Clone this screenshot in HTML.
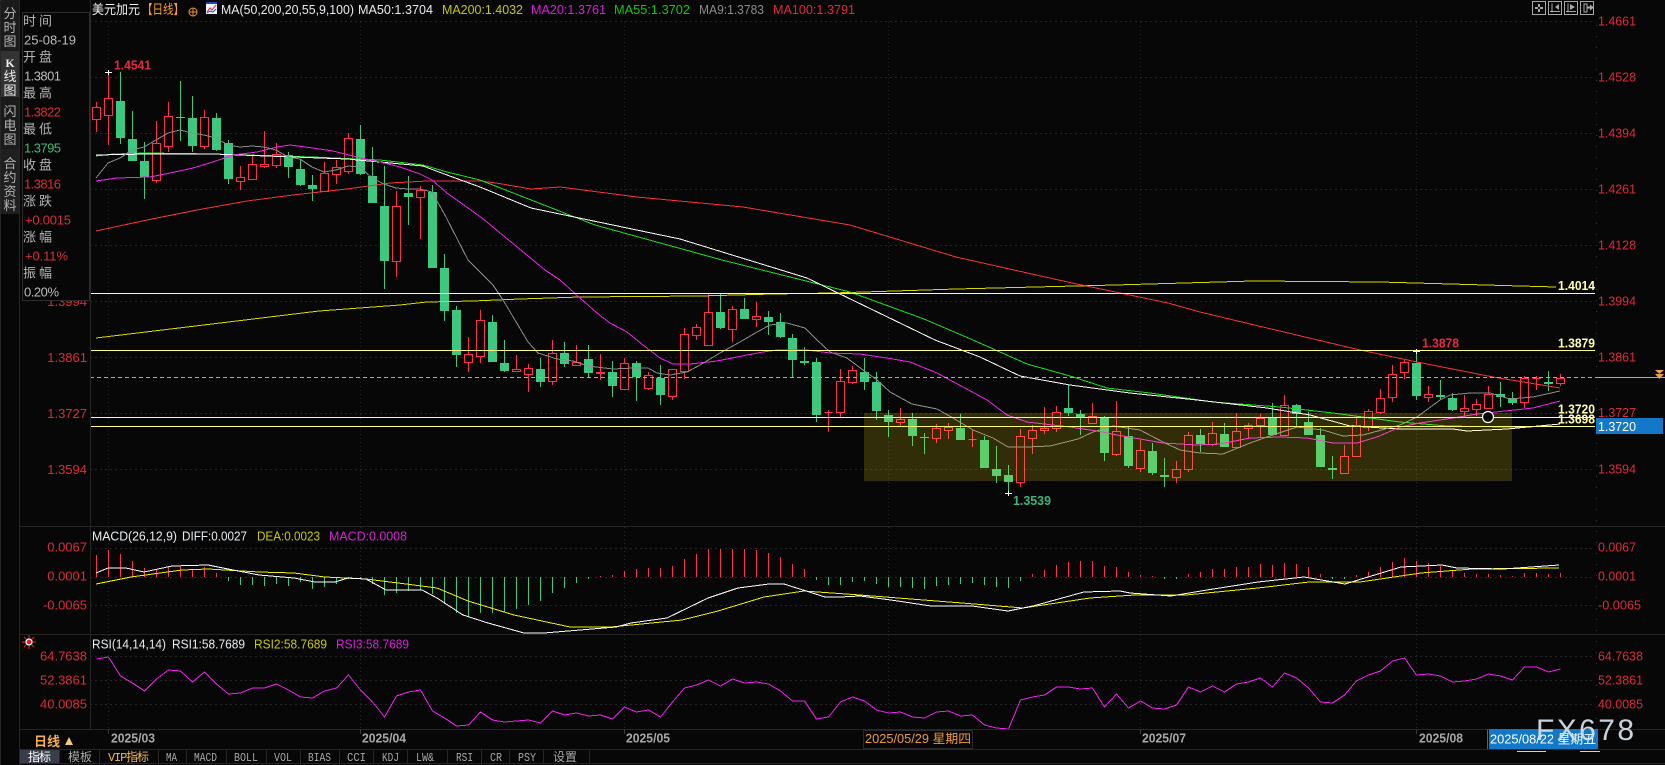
<!DOCTYPE html>
<html><head><meta charset="utf-8"><title>美元加元 日线</title>
<style>
html,body{margin:0;padding:0;background:#070707;width:1665px;height:765px;overflow:hidden}
svg{display:block}
text{font-family:"Liberation Sans","Noto Sans CJK SC",sans-serif;font-size:13px;fill:#b8b8b8}
.r{fill:#dc2a3c}.w{fill:#e8ecf0}.cn{font-size:13px;fill:#b4b4b4}
.ax{fill:#dc2a3c}.g{fill:#3fb97c}.y{fill:#c8c800}.m{fill:#d820d8}.p{fill:#ffffa8;font-weight:bold;font-size:12.5px}
.t{font-family:"Liberation Mono","Noto Sans CJK SC",monospace;font-size:12px;fill:#a8a8a8}
.d{fill:#a8a8a8;font-weight:bold;font-size:12.5px}
</style></head><body>
<svg width="1665" height="765" viewBox="0 0 1665 765" xmlns="http://www.w3.org/2000/svg">
<rect width="1665" height="765" fill="#070707"/>

<!-- grid -->
<g stroke="#262626" stroke-dasharray="2 3" fill="none" shape-rendering="crispEdges">
<path d="M90 21.5H1595M90 77.5H1595M90 133.5H1595M90 189.5H1595M90 245.5H1595M90 301.5H1595M90 357.5H1595M90 413.5H1595M90 469.5H1595M90 548.5H1595M90 577.5H1595M90 605.5H1595M90 656.5H1595M90 680.5H1595M90 704.5H1595"/>
<path stroke-dasharray="1 3" d="M108.5 22V525M360.5 22V525M624.5 22V525M888.5 22V525M1140.5 22V525M1416.5 22V525M108.5 527V633M360.5 527V633M624.5 527V633M888.5 527V633M1140.5 527V633M1416.5 527V633M108.5 635V729M360.5 635V729M624.5 635V729M888.5 635V729M1140.5 635V729M1416.5 635V729"/>
<path stroke-dasharray="1 10" stroke="#383838" d="M1596.5 25V729"/>
</g>

<!-- candles -->
<g shape-rendering="crispEdges">
<path fill="none" stroke="#ff2f4b" d="M96.5 102V132M108.5 72V145M156.5 121V183M168.5 102V152M204.5 110V149M240.5 166V190M252.5 156V179M264.5 131V168M276.5 143V168M324.5 162V191M336.5 160V184M348.5 133V174M396.5 191V277M420.5 186V239M468.5 337V372M480.5 310V363M516.5 355V372M528.5 364V392M552.5 340V385M576.5 345V366M600.5 354V380M624.5 358V390M648.5 372V390M672.5 369V400M684.5 328V379M696.5 324V340M708.5 293V345M732.5 306V342M756.5 302V327M828.5 410V432M840.5 369V417M852.5 366V384M900.5 408V426M936.5 424V443M948.5 423V439M972.5 430V447M1020.5 429V487M1032.5 425V454M1044.5 407V434M1056.5 406V432M1092.5 403V423M1116.5 401V456M1140.5 440V472M1176.5 461V483M1188.5 432V472M1212.5 422V446M1236.5 413V447M1248.5 423V439M1260.5 414V438M1284.5 395V436M1344.5 445V473M1356.5 416V456M1368.5 409V431M1380.5 389V414M1392.5 365V402M1404.5 359V379M1428.5 386V402M1464.5 395V417M1476.5 399V416M1488.5 386V408M1524.5 376V408M1536.5 376V390M1560.5 374V386"/>
<path fill="none" stroke="#3cc87f" d="M120.5 72V144M132.5 111V161M144.5 142V199M180.5 81V141M192.5 96V152M216.5 113V151M228.5 140V184M288.5 152V178M300.5 160V186M312.5 175V201M360.5 125V175M372.5 147V203M384.5 166V289M408.5 176V225M432.5 185V268M444.5 254V321M456.5 306V367M492.5 315V362M504.5 340V372M540.5 358V387M564.5 342V367M588.5 345V377M612.5 361V397M636.5 361V401M660.5 365V405M720.5 293V329M744.5 298V319M768.5 311V335M780.5 313V338M792.5 334V377M804.5 347V365M816.5 358V422M864.5 358V390M876.5 372V420M888.5 410V437M912.5 413V446M924.5 433V454M960.5 414V440M984.5 436V468M996.5 446V483M1008.5 465V493M1068.5 385V416M1080.5 410V435M1104.5 416V461M1128.5 427V468M1152.5 443V475M1164.5 458V487M1200.5 429V452M1224.5 423V447M1272.5 403V435M1296.5 404V427M1308.5 412V435M1320.5 428V467M1332.5 456V479M1416.5 351V400M1440.5 380V400M1452.5 393V411M1500.5 382V407M1512.5 392V405M1548.5 371V391"/>
<path fill="#070707" stroke="#ff2f4b" d="M92.5 107.5h8v12h-8zM104.5 98.5h8v17h-8zM152.5 143.5h8v37h-8zM164.5 116.5h8v30h-8zM200.5 117.5h8v29h-8zM236.5 177.5h8v4h-8zM248.5 164.5h8v15h-8zM260.5 164.5h8v2h-8zM272.5 154.5h8v11h-8zM320.5 173.5h8v18h-8zM332.5 167.5h8v7h-8zM344.5 138.5h8v33h-8zM392.5 206.5h8v55h-8zM416.5 190.5h8v7h-8zM464.5 354.5h8v8h-8zM476.5 320.5h8v36h-8zM512.5 369.5h8v2h-8zM524.5 368.5h8v6h-8zM548.5 353.5h8v28h-8zM572.5 362.5h8v3h-8zM596.5 372.5h8v1h-8zM620.5 363.5h8v26h-8zM644.5 375.5h8v13h-8zM668.5 369.5h8v27h-8zM680.5 334.5h8v37h-8zM692.5 327.5h8v8h-8zM704.5 312.5h8v33h-8zM728.5 309.5h8v20h-8zM752.5 316.5h8v3h-8zM824.5 412.5h8v0h-8zM836.5 381.5h8v31h-8zM848.5 370.5h8v12h-8zM896.5 419.5h8v3h-8zM932.5 428.5h8v10h-8zM944.5 427.5h8v3h-8zM968.5 439.5h8v0h-8zM1016.5 436.5h8v46h-8zM1028.5 430.5h8v8h-8zM1040.5 428.5h8v2h-8zM1052.5 412.5h8v16h-8zM1088.5 416.5h8v7h-8zM1112.5 431.5h8v23h-8zM1136.5 450.5h8v18h-8zM1172.5 469.5h8v8h-8zM1184.5 435.5h8v34h-8zM1208.5 433.5h8v11h-8zM1232.5 431.5h8v16h-8zM1244.5 425.5h8v3h-8zM1256.5 418.5h8v7h-8zM1280.5 405.5h8v30h-8zM1340.5 456.5h8v17h-8zM1352.5 425.5h8v31h-8zM1364.5 411.5h8v15h-8zM1376.5 398.5h8v14h-8zM1388.5 374.5h8v23h-8zM1400.5 362.5h8v10h-8zM1424.5 394.5h8v3h-8zM1460.5 408.5h8v3h-8zM1472.5 404.5h8v5h-8zM1484.5 394.5h8v14h-8zM1520.5 378.5h8v24h-8zM1532.5 378.5h8v0h-8zM1556.5 378.5h8v5h-8z"/>
<path fill="#3cc87f" d="M116 101h9v37h-9zM128 139h9v22h-9zM140 161h9v16h-9zM176 117h9v1h-9zM188 118h9v28h-9zM212 118h9v32h-9zM224 143h9v36h-9zM284 155h9v12h-9zM296 169h9v16h-9zM308 185h9v4h-9zM356 139h9v35h-9zM368 176h9v27h-9zM380 206h9v55h-9zM404 193h9v4h-9zM428 192h9v76h-9zM440 268h9v43h-9zM452 310h9v45h-9zM488 322h9v40h-9zM500 363h9v8h-9zM536 369h9v13h-9zM560 353h9v11h-9zM584 359h9v14h-9zM608 372h9v14h-9zM632 363h9v14h-9zM656 378h9v17h-9zM716 312h9v16h-9zM740 309h9v10h-9zM764 317h9v5h-9zM776 322h9v15h-9zM788 338h9v22h-9zM800 361h9v2h-9zM812 362h9v53h-9zM860 372h9v10h-9zM872 382h9v29h-9zM884 415h9v7h-9zM908 419h9v17h-9zM920 437h9v1h-9zM956 428h9v12h-9zM980 440h9v28h-9zM992 469h9v7h-9zM1004 475h9v7h-9zM1064 408h9v5h-9zM1076 414h9v3h-9zM1100 417h9v36h-9zM1124 436h9v30h-9zM1148 451h9v22h-9zM1160 475h9v2h-9zM1196 435h9v9h-9zM1220 434h9v13h-9zM1268 418h9v17h-9zM1292 405h9v9h-9zM1304 422h9v13h-9zM1316 435h9v32h-9zM1328 468h9v2h-9zM1412 363h9v33h-9zM1436 395h9v2h-9zM1448 398h9v12h-9zM1496 394h9v3h-9zM1508 398h9v5h-9zM1544 382h9v2h-9z"/>
</g>

<!-- MA lines -->
<g fill="none" shape-rendering="crispEdges">
<polyline stroke="#d8d800" points="96,338 212,324 319,311 400,305 427,302 473,301 520,299 580,297 700,296 773,294 833,293 956,289 1115,285 1253,281 1380,282 1556,287"/>
<polyline stroke="#f83232" points="96,231 147,220 197,210 247,201 293,195 347,189 390,183 427,181 480,181 496,183 531,189 560,187 637,197 743,207 850,225 956,257 1072,283 1168,303 1200,312 1267,328 1360,350 1417,362 1493,377 1560,388"/>
<polyline stroke="#18e018" points="96,156 113,154 147,153 213,154 313,157 380,160 423,165 447,172 480,180 595,225 722,260 850,292 924,319 973,340 1000,352 1027,364 1070,376 1107,388 1150,393 1213,402 1280,407 1333,413 1400,422 1447,426 1507,427 1530,427 1560,424"/>
<polyline stroke="#ffffff" points="96,155 147,154 213,154 347,159 423,166 447,175 480,187 531,208 680,239 807,278 935,340 980,357 1020,376 1070,385 1130,393 1197,400 1267,408 1310,415 1350,426 1400,429 1453,429 1467,431 1507,429 1560,424"/>
<polyline stroke="#f020f0" points="96,181 117,178 150,177 170,173 193,168 213,162 233,155 257,152 277,147 290,145 313,148 333,151 357,157 380,162 400,167 420,174 432,180 447,193 482,218 545,270 560,280 580,298 597,313 610,323 627,332 643,345 660,358 673,364 690,364 717,361 737,357 763,352 777,350 807,350 830,353 860,354 887,358 910,362 937,373 963,387 987,400 1007,415 1027,422 1070,427 1097,431 1117,435 1163,443 1197,445 1220,444 1250,438 1280,437 1307,438 1333,443 1357,443 1377,437 1400,427 1420,423 1453,418 1477,414 1533,408 1560,401"/>
<polyline stroke="#8c8c8c" points="96,178 108,163 120,158 132,150 144,147 156,140 168,133 180,130 192,133 204,135 216,138 228,145 240,147 252,146 264,147 276,150 288,157 300,159 312,167 324,172 336,170 348,166 360,167 372,178 384,184 396,188 408,189 420,189 432,192 446,217 468,260 478,270 493,285 503,300 515,320 528,342 538,353 557,359 573,361 588,366 613,369 633,368 648,368 657,373 670,375 687,372 700,365 720,353 740,342 757,332 770,325 787,323 805,328 817,340 830,352 847,358 863,370 877,380 890,392 912,404 937,409 953,418 973,430 993,438 1008,447 1027,447 1050,446 1078,439 1093,432 1113,426 1140,430 1163,442 1180,450 1200,453 1223,454 1250,443 1267,437 1297,427 1323,430 1343,436 1363,435 1400,425 1417,417 1440,400 1450,395 1470,393 1490,393 1510,399 1533,397 1560,391"/>
</g>

<!-- horizontal drawn lines -->
<g stroke="#ffff8c" shape-rendering="crispEdges">
<path d="M90 293.5H1595M90 350.5H1595M90 417.5H1595M90 426.5H1595"/>
</g>
<path d="M90 377.5H1595" stroke="#e8a050" stroke-dasharray="4 3" shape-rendering="crispEdges"/>
<path d="M1595 377.5H1665" stroke="#e8a050" shape-rendering="crispEdges"/>
<path d="M1655 370h9l-4.500 4zM1655 374h9l-4.500 5z" fill="#e8a050"/>

<!-- zone -->
<rect x="864" y="413" width="648" height="68" fill="rgb(255,235,20)" fill-opacity=".17"/>

<!-- high/low marks -->
<g stroke="#fff" shape-rendering="crispEdges">
<path d="M105 72.500h7M108.500 70v5M1005 493.500h7M1008.500 491v5M1413 351.500h7M1416.500 349v5"/>
</g>
<circle cx="1488" cy="417" r="5.500" fill="#070707" stroke="#fff" stroke-width="1.200"/>
<text x="114" y="69.500" style="font-weight:bold;fill:#e8283e" textLength="37" lengthAdjust="spacingAndGlyphs">1.4541</text>
<text x="1013" y="505" style="font-weight:bold;fill:#3cb37a" textLength="38" lengthAdjust="spacingAndGlyphs">1.3539</text>
<text x="1422" y="347.500" style="font-weight:bold;fill:#e8283e" textLength="37" lengthAdjust="spacingAndGlyphs">1.3878</text>
<text x="1558" y="290" class="p" textLength="37" lengthAdjust="spacingAndGlyphs">1.4014</text>
<text x="1558" y="347.500" class="p" textLength="37" lengthAdjust="spacingAndGlyphs">1.3879</text>
<text x="1558" y="423.500" class="p" textLength="37" lengthAdjust="spacingAndGlyphs">1.3698</text>
<text x="1558" y="413.500" class="p" textLength="37" lengthAdjust="spacingAndGlyphs">1.3720</text>

<!-- MACD histogram -->
<g shape-rendering="crispEdges" fill="none">
<path stroke="#ff3050" d="M96.500 577V555M108.500 577V550M120.500 577V554M132.500 577V561M144.500 577V568M156.500 577V569M168.500 577V566M180.500 577V566M192.500 577V569M204.500 577V567M216.500 577V573M600.500 577V576M612.500 577V575M624.500 577V571M636.500 577V569M648.500 577V568M660.500 577V568M672.500 577V566M684.500 577V559M696.500 577V554M708.500 577V549M720.500 577V549M732.500 577V549M744.500 577V549M756.500 577V550M768.500 577V553M780.500 577V557M792.500 577V564M804.500 577V569M1032.500 577V574M1044.500 577V570M1056.500 577V565M1068.500 577V562M1080.500 577V561M1092.500 577V561M1104.500 577V566M1116.500 577V567M1128.500 577V572M1140.500 577V575M1152.500 577V576M1188.500 577V574M1200.500 577V572M1212.500 577V569M1224.500 577V569M1236.500 577V567M1248.500 577V567M1260.500 577V564M1272.500 577V565M1284.500 577V563M1296.500 577V564M1308.500 577V567M1320.500 577V574M1356.500 577V575M1368.500 577V572M1380.500 577V567M1392.500 577V562M1404.500 577V558M1416.500 577V561M1428.500 577V563M1440.500 577V566M1452.500 577V570M1464.500 577V573M1476.500 577V574M1488.500 577V574M1500.500 577V575M1512.500 577V576M1524.500 577V573M1536.500 577V573M1548.500 577V574M1560.500 577V573"/>
<path stroke="#3cc87f" d="M228.500 577V581M240.500 577V585M252.500 577V585M264.500 577V586M276.500 577V584M288.500 577V586M300.500 577V582M312.500 577V589M324.500 577V587M336.500 577V584M348.500 577V579M360.500 577V579M372.500 577V584M384.500 577V595M396.500 577V593M408.500 577V591M420.500 577V590M432.500 577V594M444.500 577V604M456.500 577V613M468.500 577V617M480.500 577V613M492.500 577V613M504.500 577V612M516.500 577V609M528.500 577V605M540.500 577V601M552.500 577V593M564.500 577V588M576.500 577V583M588.500 577V579M816.500 577V580M828.500 577V585M840.500 577V585M852.500 577V582M864.500 577V581M876.500 577V584M888.500 577V587M900.500 577V587M912.500 577V588M924.500 577V589M936.500 577V586M948.500 577V585M960.500 577V584M972.500 577V583M984.500 577V585M996.500 577V587M1008.500 577V588M1020.500 577V581M1164.500 577V579M1176.500 577V579M1332.500 577V579M1344.500 577V579"/>
</g>
<g fill="none" shape-rendering="crispEdges">
<polyline stroke="#f0f000" points="96,584 131,577 182,570 208,569 259,572 294,573 325,577 366,579 406,584 437,588 468,601 514,615 570,627 611,627 682,620 718,611 764,597 804,591 860,595 911,599 962,603 1023,608 1090,598 1135,595 1186,595 1258,588 1309,582 1360,582 1421,573 1472,569 1559,568"/>
<polyline stroke="#ffffff" points="96,573 108,568 126,568 144,572 172,566 208,565 228,569 259,575 294,578 315,582 335,582 348,578 366,579 386,590 422,590 437,598 463,615 488,623 524,633 544,633 616,627 631,623 667,618 708,598 738,588 769,584 784,584 825,597 840,597 860,596 891,600 931,606 972,606 1008,611 1033,606 1084,592 1120,591 1130,593 1171,596 1207,590 1258,582 1304,577 1345,584 1401,567 1442,565 1457,568 1503,569 1559,565"/>
</g>

<!-- RSI -->
<polyline fill="none" stroke="#f020f0" shape-rendering="crispEdges" points="96.500,659 108.500,657 120.500,676 132.500,683 144.500,691 156.500,679 168.500,670 180.500,671 192.500,682 204.500,672 216.500,684 228.500,694 240.500,693 252.500,688 264.500,688 276.500,684 288.500,690 300.500,697 312.500,698 324.500,691 336.500,688 348.500,675 360.500,690 372.500,702 384.500,717 396.500,696 408.500,692 420.500,690 432.500,711 444.500,718 456.500,726 468.500,725 480.500,712 492.500,720 504.500,722 516.500,721 528.500,720 540.500,723 552.500,711 564.500,715 576.500,713 588.500,716 600.500,715 612.500,719 624.500,707 636.500,712 648.500,710 660.500,717 672.500,702 684.500,688 696.500,685 708.500,680 720.500,686 732.500,679 744.500,683 756.500,682 768.500,684 780.500,691 792.500,701 804.500,701 816.500,719 828.500,717 840.500,702 852.500,697 864.500,701 876.500,710 888.500,713 900.500,712 912.500,717 924.500,718 936.500,712 948.500,711 960.500,716 972.500,715 984.500,725 996.500,728 1008.500,729 1020.500,700 1032.500,697 1044.500,695 1056.500,687 1068.500,687 1080.500,689 1092.500,688 1104.500,707 1116.500,694 1128.500,708 1140.500,701 1152.500,708 1164.500,709 1176.500,705 1188.500,687 1200.500,692 1212.500,686 1224.500,692 1236.500,684 1248.500,682 1260.500,678 1272.500,687 1284.500,673 1296.500,678 1308.500,688 1320.500,702 1332.500,703 1344.500,695 1356.500,681 1368.500,675 1380.500,671 1392.500,661 1404.500,658 1416.500,675 1428.500,674 1440.500,676 1452.500,682 1464.500,681 1476.500,679 1488.500,674 1500.500,676 1512.500,680 1524.500,667 1536.500,667 1548.500,672 1560.500,669"/>

<!-- frame lines -->
<g stroke="#262626" shape-rendering="crispEdges">
<path d="M90.500 0V729M19.500 0V765M0.500 0V765M20 526.500H1665M20 634.500H1665M20 729.500H1665M20 749.500H1665M20 763.500H1665"/>
<path stroke="#3a3a3a" d="M108.500 729V734M360.500 729V734M624.500 729V734M1140.500 729V734M1416.500 729V734"/>
<path d="M59.500 749V763M99.500 749V763M158.500 749V763M186.500 749V763M226.500 749V763M266.500 749V763M300.500 749V763M339.500 749V763M373.500 749V763M407.500 749V763M447.500 749V763M481.500 749V763M509.500 749V763M543.500 749V763M589.500 749V763"/>
</g>

<!-- left axis labels -->
<g text-anchor="end">
<text x="87" y="306" class="ax">1.3994</text>
<text x="87" y="362" class="ax">1.3861</text>
<text x="87" y="418" class="ax">1.3727</text>
<text x="87" y="474" class="ax">1.3594</text>
<text x="87" y="551.500" class="ax">0.0067</text>
<text x="87" y="580.500" class="ax">0.0001</text>
<text x="87" y="609.500" class="ax">-0.0065</text>
<text x="87" y="660.500" class="ax">64.7638</text>
<text x="87" y="684.500" class="ax">52.3861</text>
<text x="87" y="708.500" class="ax">40.0085</text>
</g>

<!-- right axis labels -->
<g>
<text x="1598" y="25.500" class="ax" textLength="38" lengthAdjust="spacingAndGlyphs">1.4661</text>
<text x="1598" y="81.500" class="ax" textLength="38" lengthAdjust="spacingAndGlyphs">1.4528</text>
<text x="1598" y="137.500" class="ax" textLength="38" lengthAdjust="spacingAndGlyphs">1.4394</text>
<text x="1598" y="193.500" class="ax" textLength="38" lengthAdjust="spacingAndGlyphs">1.4261</text>
<text x="1598" y="249.500" class="ax" textLength="38" lengthAdjust="spacingAndGlyphs">1.4128</text>
<text x="1598" y="305.500" class="ax" textLength="38" lengthAdjust="spacingAndGlyphs">1.3994</text>
<text x="1598" y="361.500" class="ax" textLength="38" lengthAdjust="spacingAndGlyphs">1.3861</text>
<text x="1598" y="417" class="ax" textLength="38" lengthAdjust="spacingAndGlyphs">1.3727</text>
<text x="1598" y="473.500" class="ax" textLength="38" lengthAdjust="spacingAndGlyphs">1.3594</text>
<text x="1598" y="551.500" class="ax" textLength="38" lengthAdjust="spacingAndGlyphs">0.0067</text>
<text x="1598" y="580.500" class="ax" textLength="38" lengthAdjust="spacingAndGlyphs">0.0001</text>
<text x="1598" y="609.500" class="ax" textLength="43" lengthAdjust="spacingAndGlyphs">-0.0065</text>
<text x="1598" y="660.500" class="ax" textLength="45" lengthAdjust="spacingAndGlyphs">64.7638</text>
<text x="1598" y="684.500" class="ax" textLength="45" lengthAdjust="spacingAndGlyphs">52.3861</text>
<text x="1598" y="708.500" class="ax" textLength="45" lengthAdjust="spacingAndGlyphs">40.0085</text>
</g>
<rect x="1596" y="418" width="67" height="16" fill="#1478c8"/>
<text x="1598" y="431" style="fill:#fff" textLength="38" lengthAdjust="spacingAndGlyphs">1.3720</text>

<!-- sidebar -->
<rect x="1" y="0" width="18" height="51" fill="#1b1b1b"/>
<rect x="1" y="51" width="18" height="46" fill="#333333"/>
<rect x="1" y="97" width="18" height="52" fill="#1b1b1b"/>
<rect x="1" y="149" width="18" height="65" fill="#1f1f1f"/>
<g text-anchor="middle">
<text x="10" y="18" class="cn">分</text><text x="10" y="32" class="cn">时</text><text x="10" y="46" class="cn">图</text>
<text x="10" y="67" style="fill:#eee;font-weight:bold;font-size:12px;font-family:'Liberation Serif',serif">K</text><text x="10" y="81" style="fill:#eee">线</text><text x="10" y="95" style="fill:#eee">图</text>
<text x="10" y="116" class="cn">闪</text><text x="10" y="130" class="cn">电</text><text x="10" y="144" class="cn">图</text>
<text x="10" y="168" class="cn">合</text><text x="10" y="182" class="cn">约</text><text x="10" y="196" class="cn">资</text><text x="10" y="210" class="cn">料</text>
</g>

<!-- info panel -->
<rect x="22.500" y="12.500" width="67" height="288" fill="#070707" stroke="#2e2e2e" shape-rendering="crispEdges"/>
<g>
<text x="23 39" y="25.500" class="cn">时间</text>
<text x="24" y="44.500" style="fill:#bbb" textLength="52">25-08-19</text>
<text x="23 39" y="61.500" class="cn">开盘</text>
<text x="24" y="80.500" style="fill:#bbb" textLength="37">1.3801</text>
<text x="23 39" y="97.500" class="cn">最高</text>
<text x="24" y="116.500" class="r" textLength="37">1.3822</text>
<text x="23 39" y="133.500" class="cn">最低</text>
<text x="24" y="152.500" class="g" textLength="37">1.3795</text>
<text x="23 39" y="169.500" class="cn">收盘</text>
<text x="24" y="188.500" class="r" textLength="37">1.3816</text>
<text x="23 39" y="205.500" class="cn">涨跌</text>
<text x="25" y="224.500" class="r" textLength="46">+0.0015</text>
<text x="23 39" y="241.500" class="cn">涨幅</text>
<text x="25" y="260.500" class="r" textLength="43">+0.11%</text>
<text x="23 39" y="277.500" class="cn">振幅</text>
<text x="24" y="296.500" style="fill:#bbb" textLength="35">0.20%</text>
</g>

<!-- header -->
<text x="92" y="14" style="fill:#f2f2f2" textLength="48" lengthAdjust="spacingAndGlyphs">美元加元</text>
<text x="142" y="14" style="fill:#f5a030" textLength="42" lengthAdjust="spacingAndGlyphs">【日线】</text>
<g fill="none" stroke="#e8902a"><circle cx="193" cy="12" r="4"/><path d="M189 12h8M193 8v8"/></g>
<rect x="206" y="2" width="11" height="12" fill="#f2f4ff"/><rect x="206" y="2" width="11" height="2" fill="#2040c0"/>
<path d="M207 12l3-4 2 2 4-5" fill="none" stroke="#e02020"/><path d="M207 13l3-2 3 1 3-3" fill="none" stroke="#2050d0"/>
<text x="221" y="14" class="w" textLength="133" lengthAdjust="spacingAndGlyphs">MA(50,200,20,55,9,100)</text>
<text x="358" y="14" class="w" textLength="75" lengthAdjust="spacingAndGlyphs">MA50:1.3704</text>
<text x="442" y="14" class="y" textLength="81" lengthAdjust="spacingAndGlyphs">MA200:1.4032</text>
<text x="531" y="14" class="m" textLength="75" lengthAdjust="spacingAndGlyphs">MA20:1.3761</text>
<text x="614" y="14" style="fill:#10c810" textLength="76" lengthAdjust="spacingAndGlyphs">MA55:1.3702</text>
<text x="699" y="14" style="fill:#8c8c8c" textLength="65" lengthAdjust="spacingAndGlyphs">MA9:1.3783</text>
<text x="773" y="14" style="fill:#dc2a3c" textLength="82" lengthAdjust="spacingAndGlyphs">MA100:1.3791</text>

<!-- top right buttons -->
<g fill="none" stroke="#a8a8a8" stroke-width="1.200" shape-rendering="crispEdges">
<rect x="1532.500" y="1.500" width="13" height="13"/><rect x="1548.500" y="1.500" width="13" height="13"/><rect x="1564.500" y="1.500" width="13" height="13"/><rect x="1580.500" y="1.500" width="13" height="13"/>
<path d="M1552 3.500v9M1550 11.500h10M1568 3.500v9M1566 11.500h10M1584 4h3v8h-3z"/>
</g>
<g fill="#a8a8a8">
<rect x="1538" y="4" width="2" height="3"/><rect x="1538" y="9" width="2" height="3"/><rect x="1535" y="7" width="3" height="2"/><rect x="1540" y="7" width="3" height="2"/>
<path d="M1559 4v6l-4-3zM1570 4v6l5-3zM1587 6.500h3v-2l4 3-4 3v-2h-3z"/>
</g>

<!-- MACD title -->
<text x="92" y="540.500" class="w" textLength="85" lengthAdjust="spacingAndGlyphs">MACD(26,12,9)</text>
<text x="182" y="540.500" class="w" textLength="65" lengthAdjust="spacingAndGlyphs">DIFF:0.0027</text>
<text x="257" y="540.500" class="y" textLength="63" lengthAdjust="spacingAndGlyphs">DEA:0.0023</text>
<text x="329" y="540.500" class="m" textLength="78" lengthAdjust="spacingAndGlyphs">MACD:0.0008</text>

<!-- RSI title -->
<g stroke="#f02020" stroke-width="1"><path d="M22 642h3M33 642h3M29 635v3M29 646v3M24 637l2 2M32 645l2 2M34 637l-2 2M26 645l-2 2"/></g>
<circle cx="29" cy="642" r="3" fill="#f01020" stroke="#fff" stroke-width="1.300"/>
<text x="92" y="648.500" class="w" textLength="74" lengthAdjust="spacingAndGlyphs">RSI(14,14,14)</text>
<text x="172" y="648.500" class="w" textLength="73" lengthAdjust="spacingAndGlyphs">RSI1:58.7689</text>
<text x="254" y="648.500" class="y" textLength="73" lengthAdjust="spacingAndGlyphs">RSI2:58.7689</text>
<text x="336" y="648.500" class="m" textLength="73" lengthAdjust="spacingAndGlyphs">RSI3:58.7689</text>

<!-- time axis -->
<text x="34" y="746" style="fill:#f5b050;font-weight:bold;font-size:13px" textLength="26">日线</text>
<path d="M65 745l4-8 4 8z" fill="#f5c878"/>
<text x="111" y="742.500" class="d" textLength="44" lengthAdjust="spacingAndGlyphs">2025/03</text>
<text x="362" y="742.500" class="d" textLength="44" lengthAdjust="spacingAndGlyphs">2025/04</text>
<text x="626" y="742.500" class="d" textLength="44" lengthAdjust="spacingAndGlyphs">2025/05</text>
<text x="1142" y="742.500" class="d" textLength="44" lengthAdjust="spacingAndGlyphs">2025/07</text>
<text x="1419" y="742.500" class="d" textLength="44" lengthAdjust="spacingAndGlyphs">2025/08</text>
<rect x="863.500" y="730.500" width="109" height="18" fill="#070707" stroke="#2a2a2a"/>
<text x="865" y="743" style="fill:#f09a3a;font-size:12.500px" textLength="106" lengthAdjust="spacingAndGlyphs">2025/05/29 星期四</text>
<rect x="1517" y="751" width="29" height="1" fill="#c8d4e0"/><rect x="1580" y="751" width="20" height="1" fill="#c8d4e0"/>
<rect x="1487" y="729" width="1" height="20" fill="#1478c8"/>
<rect x="1489" y="729" width="109" height="20" fill="#1478c8"/>
<text x="1490" y="743.500" style="fill:#fff;font-size:12.500px" textLength="106" lengthAdjust="spacingAndGlyphs">2025/08/22 星期五</text>
<text x="1536" y="740" style="fill:#d4dde6;font-size:30px;opacity:.95" textLength="98" lengthAdjust="spacing">FX678</text>

<!-- bottom tabs -->
<rect x="20" y="750" width="39" height="13" fill="#3a3d4a"/>
<text x="28" y="761" style="fill:#fff;font-size:12px" textLength="23">指标</text>
<text x="68" y="761" class="t" textLength="24">模板</text>
<text x="108" y="761" style="fill:#f5b840;font-size:12px;font-family:'Liberation Mono','Noto Sans CJK SC',monospace" textLength="41">VIP指标</text>
<text x="166" y="761" class="t" textLength="11" lengthAdjust="spacingAndGlyphs">MA</text>
<text x="194" y="761" class="t" textLength="23" lengthAdjust="spacingAndGlyphs">MACD</text>
<text x="234" y="761" class="t" textLength="24" lengthAdjust="spacingAndGlyphs">BOLL</text>
<text x="274" y="761" class="t" textLength="18" lengthAdjust="spacingAndGlyphs">VOL</text>
<text x="308" y="761" class="t" textLength="23" lengthAdjust="spacingAndGlyphs">BIAS</text>
<text x="347" y="761" class="t" textLength="19" lengthAdjust="spacingAndGlyphs">CCI</text>
<text x="382" y="761" class="t" textLength="17" lengthAdjust="spacingAndGlyphs">KDJ</text>
<text x="416" y="761" class="t" textLength="18" lengthAdjust="spacingAndGlyphs">LW&amp;</text>
<text x="456" y="761" class="t" textLength="17" lengthAdjust="spacingAndGlyphs">RSI</text>
<text x="490" y="761" class="t" textLength="12" lengthAdjust="spacingAndGlyphs">CR</text>
<text x="518" y="761" class="t" textLength="18" lengthAdjust="spacingAndGlyphs">PSY</text>
<text x="553" y="761" class="t" textLength="24">设置</text>
</svg>
</body></html>
